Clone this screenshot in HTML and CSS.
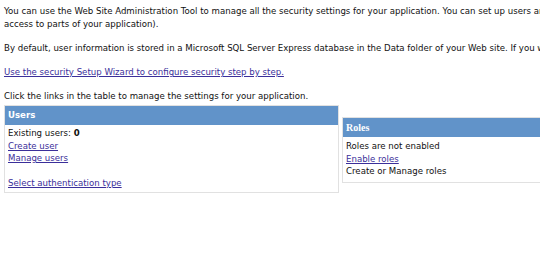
FILE: index.html
```html
<!DOCTYPE html>
<html>
<head>
<meta charset="utf-8">
<link rel="stylesheet" href="styles.css">
</head>
<body>
<div class="page">
  <p class="intro">You can use the Web Site Administration Tool to manage all the security settings for your application. You can set up users and passwords (authentication), create roles (groups of users), and create permissions (rules for controlling<br>access to parts of your application).</p>
  <p class="intro one">By default, user information is stored in a Microsoft SQL Server Express database in the Data folder of your Web site. If you want to store user information in a different database, use the Provider tab to select a different provider.</p>
  <p class="intro"><a href="#">Use the security Setup Wizard to configure security step by step.</a></p>
  <p class="intro last">Click the links in the table to manage the settings for your application.</p>
  <div class="panels">
    <div class="box users">
      <div class="box-head">Users</div>
      <div class="box-body">
        <div>Existing users: <b>0</b></div>
        <div><a href="#">Create user</a></div>
        <div><a href="#">Manage users</a></div>
        <div class="gap"></div>
        <div><a href="#">Select authentication type</a></div>
      </div>
    </div>
    <div class="box roles">
      <div class="box-head serif">Roles</div>
      <div class="box-body roles-body">
        <div>Roles are not enabled</div>
        <div><a href="#">Enable roles</a></div>
        <div>Create or Manage roles</div>
      </div>
    </div>
  </div>
</div>
</body>
</html>
```
FILE: styles.css
```css
html, body {
  margin: 0;
  padding: 0;
  background: #ffffff;
  overflow: hidden;
}
.page {
  width: 1100px;
  padding: 5px 0 0 4px;
  font-family: "DejaVu Sans", Verdana, sans-serif;
  font-size: 8.6px;
  line-height: 13px;
  color: #111;
}
.intro {
  margin: 0 0 11px 0;
}
.intro.one {
  white-space: nowrap;
}
.intro.last {
  margin-bottom: 2px;
}
a {
  color: #3b2f9a;
  text-decoration: underline;
}
.panels {
  display: flex;
  align-items: flex-start;
  gap: 3px;
}
.box {
  border: 1px solid #e1e1e1;
  background: #fff;
}
.users {
  width: 333px;
}
.roles {
  flex: 1;
  margin-top: 12px;
}
.box-head {
  background: #6193c9;
  color: #fff;
  font-weight: bold;
  height: 19px;
  line-height: 19px;
  padding-left: 3px;
}
.box-head.serif {
  font-family: "Liberation Serif", "Times New Roman", serif;
  font-size: 10px;
}
.box-body {
  padding: 2px 3px 3px 3px;
  line-height: 12.5px;
}
.roles-body {
  padding-top: 3px;
  padding-bottom: 4px;
}
.gap {
  height: 12px;
}
```
